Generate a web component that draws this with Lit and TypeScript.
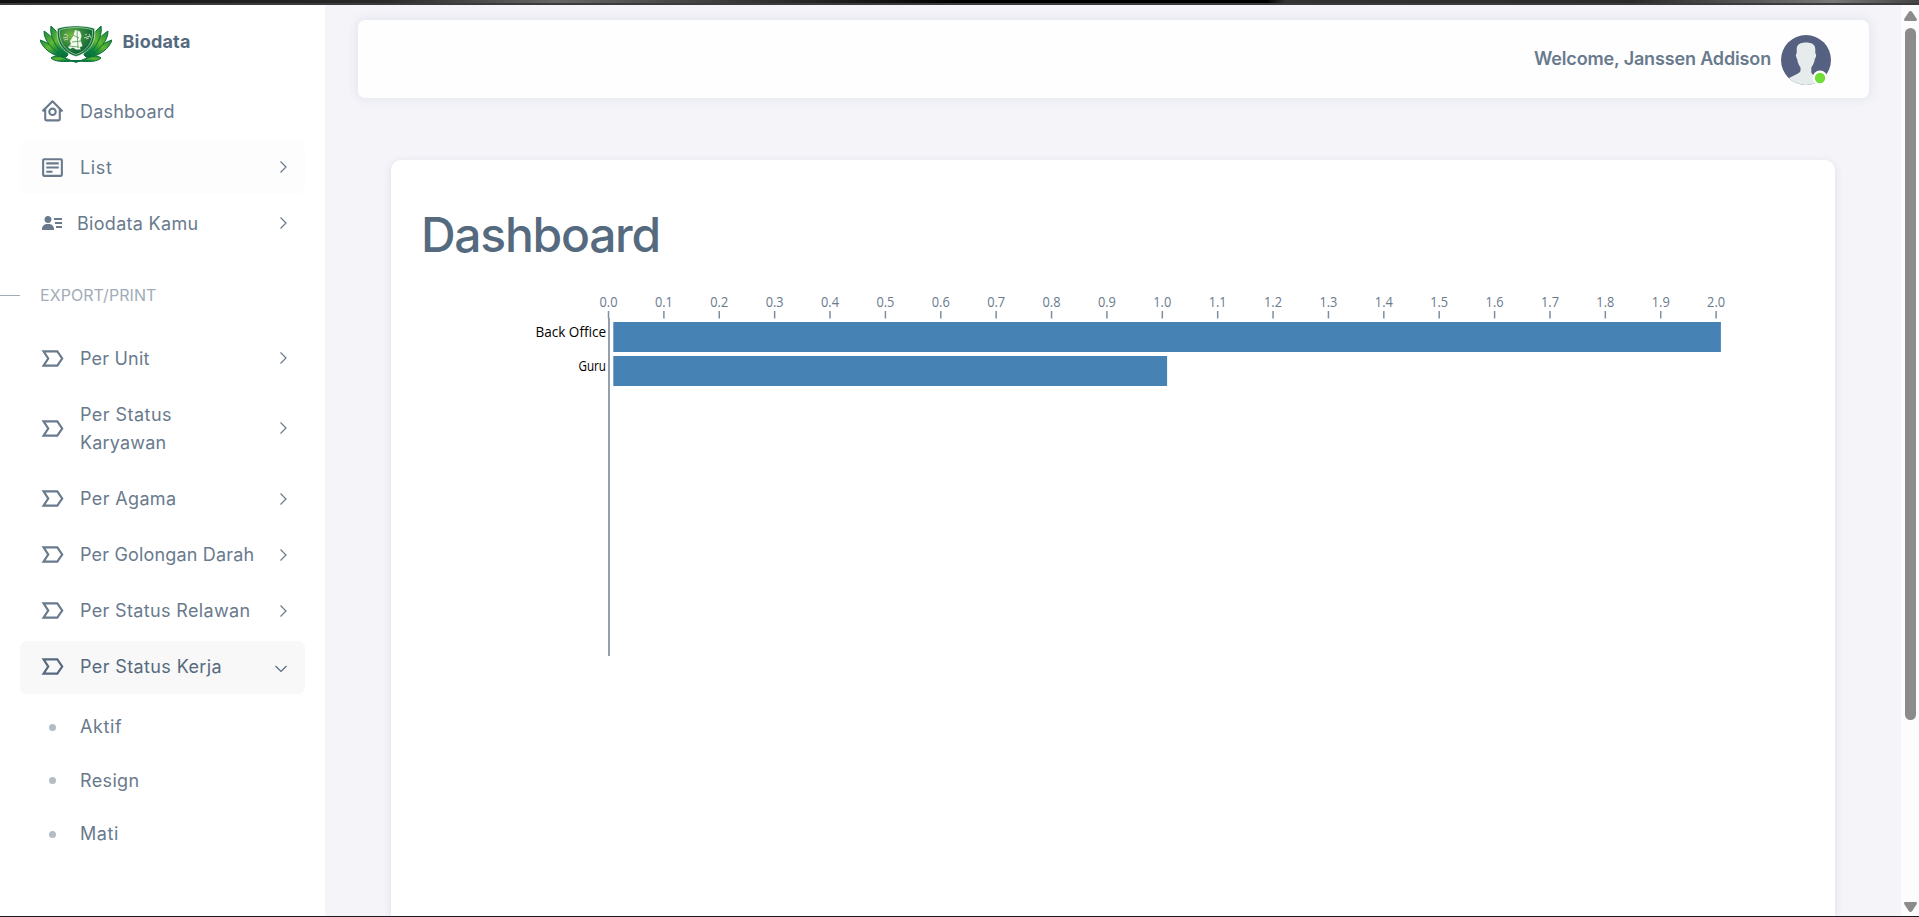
import { LitElement, html, svg, css } from "lit";
import { customElement } from "lit/decorators.js";

const SANS = 'Inter, "Open Sans", sans-serif';
const pen = document.createElement("canvas").getContext("2d")!;

/** Letter spacing that gives `text` the wanted ink width. */
function tracking(text: string, width: number, size: number, weight = 400): string {
  pen.font = `${weight} ${size}px ${SANS}`;
  const m = pen.measureText(text);
  const ink = m.actualBoundingBoxRight + m.actualBoundingBoxLeft;
  return `letter-spacing:${((width - ink) / (text.length - 1)).toFixed(3)}px`;
}

const home = svg`<path fill-rule="evenodd" d="M12.710 1.500a1 1 0 0 0-1.420 0l-9 8.800a1 1 0 0 0 0 1.420A1 1 0 0 0 3 12.300h1v7.200a2 2 0 0 0 2 2h12a2 2 0 0 0 2-2v-7.200h1a1 1 0 0 0 .71-1.710zM6 19.500V9.700l6-6 6 6v9.800z"/><circle cx="12" cy="12.300" r="3.100" fill="none" stroke="currentColor" stroke-width="2"/>`;
const detail = svg`<path fill-rule="evenodd" d="M20 3H4c-1.100 0-2 .9-2 2v14c0 1.100.9 2 2 2h16c1.100 0 2-.9 2-2V5c0-1.100-.9-2-2-2zM4 19V5h16v14z"/><path d="M6 7h12v2H6zm0 4h12v2H6zm0 4h6v2H6z"/>`;
const user = svg`<path d="M15 11h7v2h-7zm1 4h6v2h-6zm-2-8h8v2h-8zM4 19h10v-1c0-2.757-2.243-5-5-5H7c-2.757 0-5 2.243-5 5v1h2zm4-7c1.995 0 3.500-1.505 3.500-3.500S9.995 5 8 5 4.500 6.505 4.500 8.500 6.005 12 8 12z"/>`;
const label = svg`<path fill="none" stroke="currentColor" stroke-width="2.100" stroke-linejoin="miter" d="M3.400 5.100H16.600L21.300 12l-4.700 6.900H3.400L7.900 12z"/>`;

type Line = [string, number];
interface Item { icon: unknown; lines: Line[]; arrow?: boolean; mod?: string; }

const top: Item[] = [
  { icon: home, lines: [["Dashboard", 92.5]] },
  { icon: detail, lines: [["List", 31]], arrow: true, mod: "hovered" },
  { icon: user, lines: [["Biodata Kamu", 119.5]], arrow: true, mod: "tight" },
];
const reports: Item[] = [
  { icon: label, lines: [["Per Unit", 68.5]], arrow: true },
  { icon: label, lines: [["Per Status", 90], ["Karyawan", 84.5]], arrow: true },
  { icon: label, lines: [["Per Agama", 94]], arrow: true },
  { icon: label, lines: [["Per Golongan Darah", 172.5]], arrow: true },
  { icon: label, lines: [["Per Status Relawan", 168.5]], arrow: true },
  { icon: label, lines: [["Per Status Kerja", 139.5]], arrow: true, mod: "open" },
];
const subs: Line[] = [["Aktif", 42], ["Resign", 57.5], ["Mati", 37]];

@customElement("brand-logo")
export class BrandLogo extends LitElement {
  static styles = css`:host{display:block;width:72px;height:38px}svg{display:block}`;
  render() {
    const leaves = [
      "M22 33C11 29 3 24 0 15C9 18 18 24 24 32Z",
      "M24 33C13 24 4 17 4 6C13 12 21 21 26 32Z",
      "M26 32C16 22 9 11 11 1C19 8 25 18 28 30Z",
      "M32 36C22 31 14 30 11 33C15 37 24 37 34 36Z",
    ];
    const half = leaves.map((d) => svg`<path d=${d} fill="url(#leaf)" stroke="#0a6f3c" stroke-width="1"/>`);
    return html`<svg width="72" height="38" viewBox="0 0 72 38">
      <defs>
        <linearGradient id="leaf" x1="0" y1="0" x2="1" y2="1"><stop offset="0" stop-color="#1f8a3c"/><stop offset=".4" stop-color="#5fb82f"/><stop offset=".7" stop-color="#0f8440"/><stop offset="1" stop-color="#056a3a"/></linearGradient>
        <radialGradient id="field" cx=".36" cy=".3" r=".75"><stop offset="0" stop-color="#78b845"/><stop offset=".5" stop-color="#2f843c"/><stop offset="1" stop-color="#075c35"/></radialGradient>
      </defs>
      <path d="M16 20C20 32 28 35 36 38C44 35 52 32 56 20L50 35H22Z" fill="#087242"/>
      ${half}<g transform="matrix(-1 0 0 1 72 0)">${half}</g>
      <path d="M17.500 3.500C26 0 46 0 54.500 3.500C56.500 17 49 28 36 31.500C23 28 15.500 17 17.500 3.500Z" fill="#0c6f3c" stroke="#e9f4e4" stroke-width=".7"/>
      <path d="M19.500 5C28 1.800 44 1.800 52.500 5C53.500 17 47 26 36 29.500C25 26 18.500 17 19.500 5Z" fill="url(#field)" stroke="#a9d29c" stroke-width=".8"/>
      <path d="M35 5l5 1.500 1.500 4.500-1 4 2 6-3 1.500 1.500 2h-5l-3-2-3 1.500-2-2 3-3-1-3 3-4.500z" fill="#f4f8ef"/>
      <path d="M33 10l6 3M32 17l9-1M37 6l1 17M29 21l10 1" stroke="#4f9a53" stroke-width=".8" fill="none"/>
      <path d="M24 10l2-1 2 2M23 13l5-1M24 15l4-1M45 10l2-1M44 13l6-2M46 14l3-1M49 9l2 4" stroke="#c5dfbd" stroke-width=".9" fill="none"/>
    </svg>`;
  }
}

@customElement("side-menu")
export class SideMenu extends LitElement {
  static styles = css`
    :host{display:flex;flex-direction:column;width:325px;flex:none;background:#fff;color:#697a8d;font:400 18px/28px Inter,"Open Sans",sans-serif;box-sizing:border-box}
    .brand{display:flex;gap:10.500px;padding:20px 0 0 40px;height:80px;box-sizing:border-box;color:#566a7f;font-weight:700}
    .brand span{line-height:33px}
    .list{display:flex;flex-direction:column;gap:3.100px;padding:0 20px}
    .item{display:flex;align-items:center;min-height:53px;padding:12.500px 14px 12.500px 20px;box-sizing:border-box;border-radius:7px}
    .hovered{background:#fdfdfd}
    .open{background:#f8f8f8;color:#566a7f}
    .icon{width:25px;height:25px;margin:-1px 15px 0 0;fill:currentColor;flex:none}
    .tight .icon{width:24px;height:24px;margin-right:13px}
    .text{flex:1;display:flex;flex-direction:column;white-space:nowrap}
    .arrow{width:14px;height:14px;flex:none;fill:none;stroke:currentColor;stroke-width:1.200;margin:-1px 1px 0 0}
    .open .arrow{transform:translate(-2px,1.500px) rotate(90deg)}
    .head{display:flex;align-items:center;gap:20px;height:28px;margin:31px 0 23.200px;font-size:16px;color:#a1acb8}
    .head::before{content:"";width:20px;height:1px;background:#a1acb8}
    .subs{display:flex;flex-direction:column;padding:6.700px 20px}
    .sub{display:flex;align-items:center;height:53.500px;padding-left:29px;gap:24px}
    .sub::before{content:"";width:7px;height:7px;border-radius:50%;background:#b4bdc6}
  `;
  item(i: Item) {
    return html`<div class="item ${i.mod ?? ""}">
      <svg class="icon" viewBox="0 0 24 24">${i.icon}</svg>
      <div class="text">${i.lines.map(([t, w]) => html`<span style=${tracking(t, w, 18)}>${t}</span>`)}</div>
      ${i.arrow ? html`<svg class="arrow" viewBox="0 0 14 14"><path d="M4.500 1.500L10 7l-5.500 5.500"/></svg>` : ""}
    </div>`;
  }
  render() {
    return html`
      <div class="brand"><brand-logo></brand-logo><span style=${tracking("Biodata", 66.5, 18, 700)}>Biodata</span></div>
      <div class="list">${top.map((i) => this.item(i))}</div>
      <div class="head"><span style=${tracking("EXPORT/PRINT", 115, 16)}>EXPORT/PRINT</span></div>
      <div class="list">${reports.map((i) => this.item(i))}</div>
      <div class="subs">${subs.map(([t, w]) => html`<div class="sub"><span style=${tracking(t, w, 18)}>${t}</span></div>`)}</div>`;
  }
}

@customElement("unit-chart")
export class UnitChart extends LitElement {
  static styles = css`
    :host{display:block}
    svg{display:block}
    .tick{font:14px "Open Sans",sans-serif;fill:#697a8d;text-anchor:middle}
    .name{font:14px "Open Sans",sans-serif;fill:#000}
    .mark{stroke:#7f8d9d;stroke-width:1.500}
    .axis{stroke:#94a0ad;stroke-width:2}
    .bar{fill:#4682b4}
  `;
  render() {
    const step = 55.38;
    const rows = [
      { name: "Back Office", value: 2, width: 70.5 },
      { name: "Guru", value: 1, width: 27.5 },
    ];
    return html`<svg width="1340" height="370" viewBox="0 0 1340 370">
      ${Array.from({ length: 21 }, (_, i) => {
        const x = 186.5 + i * step;
        return svg`<text class="tick" x=${x} y="18" textLength="18" lengthAdjust="spacingAndGlyphs">${(i / 10).toFixed(1)}</text><path class="mark" d="M${x} 22v7.500"/>`;
      })}
      <path class="axis" d="M187 29v338"/>
      ${rows.map((r, i) => svg`
        <text class="name" x=${184 - r.width} y=${48 + i * 34} textLength=${r.width} lengthAdjust="spacingAndGlyphs">${r.name}</text>
        <rect class="bar" x="191.300" y=${33 + i * 34} width=${r.value * 553.8} height="30"/>`)}
    </svg>`;
  }
}

@customElement("app-root")
export class AppRoot extends LitElement {
  static styles = css`
    :host{display:flex;flex-direction:column;height:917px;overflow:hidden;background:#f4f4f9;font-family:Inter,"Open Sans",sans-serif;box-sizing:border-box}
    .edge{height:5px;flex:none;box-sizing:border-box;border-bottom:2px solid #3b3b3b;background:linear-gradient(90deg,#111 0,#2a2a2a 20%,#666 29%,#444 36%,#000 50%,#000 66%,#333 67%,#2a2a2a 85%,#777 95.500%,#444 100%)}
    .foot{height:1px;flex:none;background:#1c1a1c}
    .body{display:flex;flex:1;min-height:0}
    .main{flex:1;display:flex;flex-direction:column;padding:15px 32px 0 33px;overflow:hidden}
    .bar{display:flex;align-items:center;justify-content:flex-end;gap:10px;height:78px;flex:none;padding-right:38px;box-sizing:border-box;border-radius:7px;background:#fefefe;box-shadow:0 0 10px 2px rgba(67,89,113,.08)}
    .hello{font:600 18px/28px Inter,sans-serif;color:#697a8d;white-space:nowrap;padding-bottom:1px}
    .avatar{display:block;width:50px;height:50px;margin-top:2px}
    .card{flex:1;margin:62px 34px 0 33px;padding:45px 31px 0 30px;border-radius:10px 10px 0 0;background:#fff;box-shadow:0 2px 8px rgba(67,89,113,.12);overflow:hidden}
    h1{margin:0 0 23.500px;font:460 48px/60px Inter,sans-serif;color:#566a7f}
    unit-chart{margin-left:1px}
    .scroll{display:flex;flex-direction:column;align-items:center;width:18px;flex:none;background:#fcfcfc}
    .thumb{width:11px;height:692px;border-radius:6px;background:#8b8b8b;margin-left:1px}
    .arrow{width:13px;height:10px;fill:#8b8b8b;margin:6px 0 7px 1px}
    .down{margin:auto 0 4px 1px}
  `;
  render() {
    return html`
      <div class="edge"></div>
      <div class="body">
        <side-menu></side-menu>
        <div class="main">
          <div class="bar">
            <span class="hello" style=${tracking("Welcome, Janssen Addison", 236.5, 18, 600)}>Welcome, Janssen Addison</span>
            <svg class="avatar" viewBox="0 0 50 50">
              <clipPath id="round"><circle cx="25" cy="25" r="25"/></clipPath>
              <g clip-path="url(#round)">
                <path fill="#566080" d="M0 0h50v50H0z"/>
                <path fill="#e6ecec" d="M25 7.500c5.500 0 9.300 2 9.300 6.500v4.500c1 .3 1 1.500.6 3-.3 1.200-.6 2-1 2.300-.6 4-2 6.500-3.600 8.700v5c.5 1.500 2 2.500 4 3.500l10 5V52H6V44l9-4.500c2-1 4-2 4.500-3.500v-3.500c-1.600-2.200-2.800-4.700-3.400-8.700-.4-.3-.8-1-1-2.300-.4-1.500-.4-2.700.6-3V14c0-4.500 3.800-6.500 9.300-6.500z"/>
              </g>
              <circle cx="39" cy="43" r="7.500" fill="#fff"/><circle cx="39" cy="43" r="5.200" fill="#71dd37"/>
            </svg>
          </div>
          <div class="card">
            <h1><span style=${tracking("Dashboard", 234.5, 48, 460)}>Dashboard</span></h1>
            <unit-chart></unit-chart>
          </div>
        </div>
        <div class="scroll">
          <svg class="arrow" viewBox="0 0 13 10"><path d="M6.500 0Q7.500 0 8.200 1L12.800 8Q13.200 10 12 10H1Q-.2 10 .2 8L4.800 1Q5.500 0 6.500 0z"/></svg>
          <div class="thumb"></div>
          <svg class="arrow down" viewBox="0 0 13 10"><path d="M6.500 10Q7.500 10 8.200 9L12.800 2Q13.200 0 12 0H1Q-.2 0 .2 2L4.800 9Q5.500 10 6.500 10z"/></svg>
        </div>
      </div>
      <div class="foot"></div>`;
  }
}
